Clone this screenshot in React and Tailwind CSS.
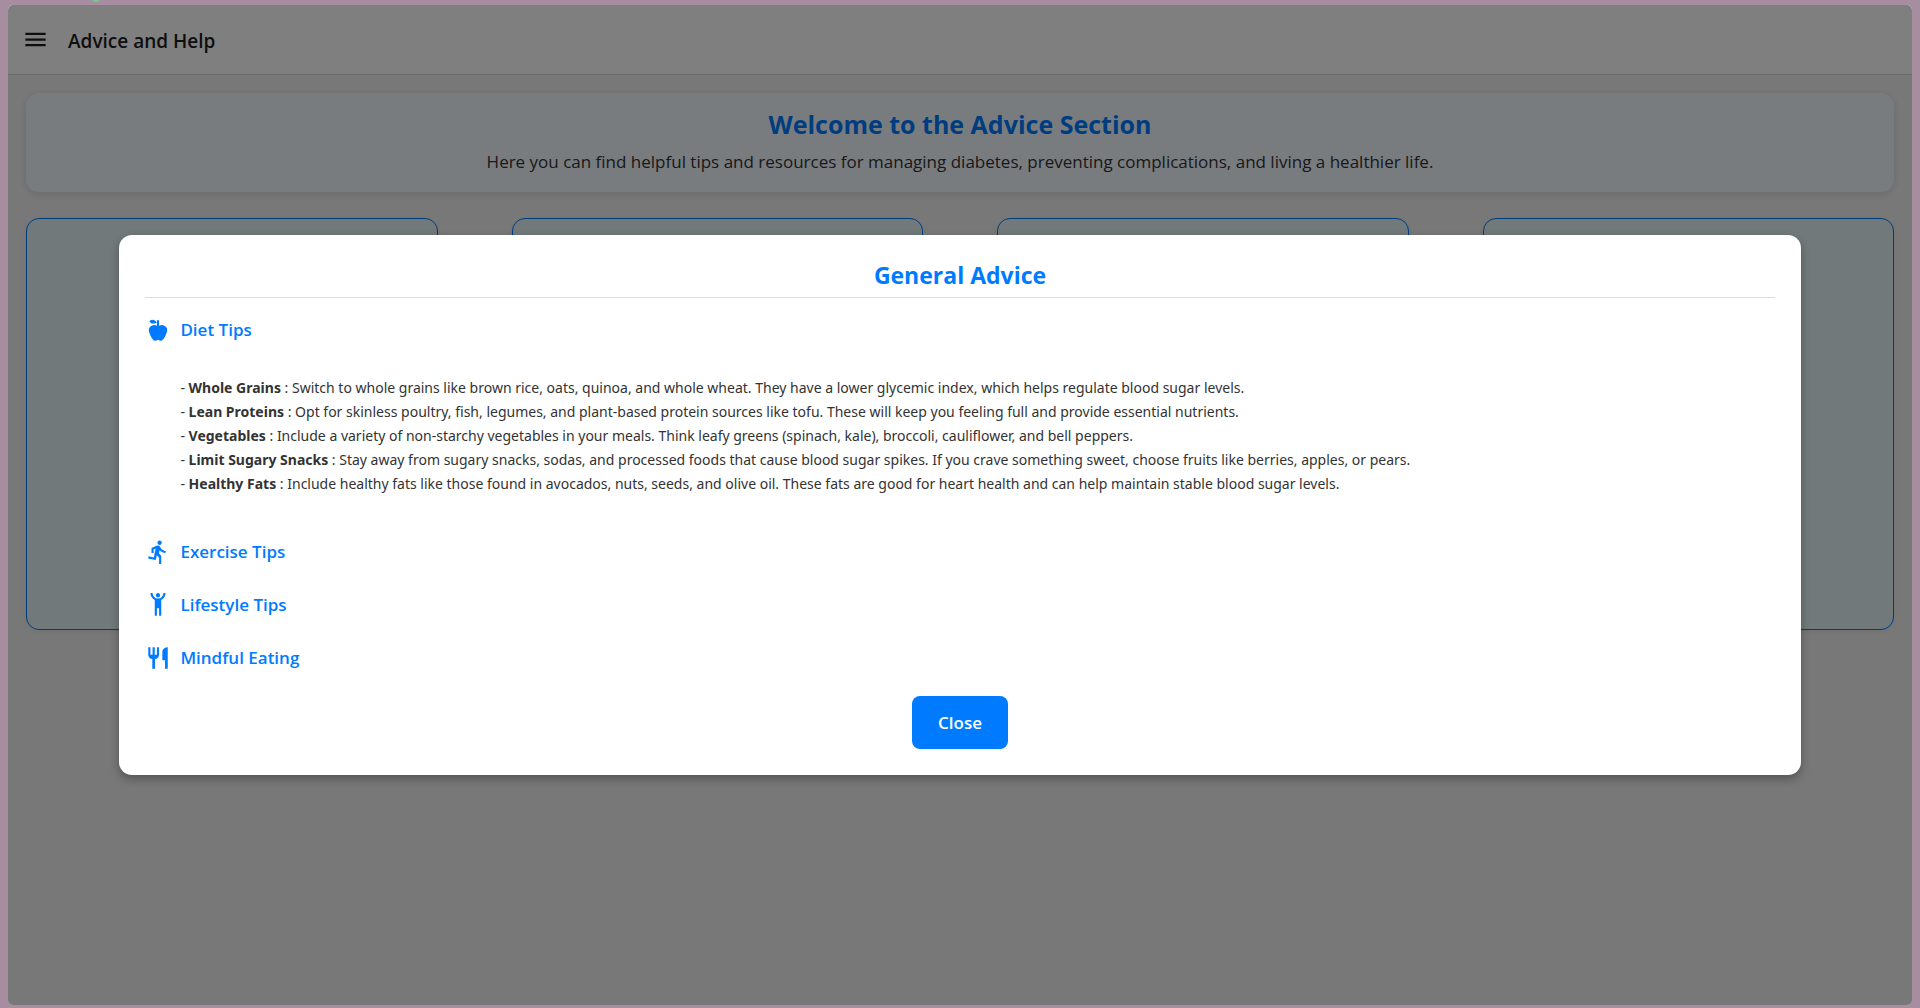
const ICONS = {
  apple:
    "M20,10C22,13 17,22 15,22C13,22 13,21 12,21C11,21 11,22 9,22C7,22 2,13 4,10C6,7 9,7 11,8V5C5.38,8.07 4.11,3.78 4.11,3.78C4.11,3.78 6.77,0.19 11,5V3H13V8C15,7 18,7 20,10Z",
  run: "M13.49,5.48C14.59,5.48 15.49,4.58 15.49,3.48C15.49,2.38 14.59,1.48 13.49,1.48C12.39,1.48 11.49,2.38 11.49,3.48C11.49,4.58 12.39,5.48 13.49,5.48M9.89,19.38L10.89,14.98L12.99,16.98V22.98H14.99V15.48L12.89,13.48L13.49,10.48C14.79,11.98 16.79,12.98 18.99,12.98V10.98C17.09,10.98 15.49,9.98 14.69,8.58L13.69,6.98C13.29,6.38 12.69,5.98 11.99,5.98C11.69,5.98 11.49,6.08 11.19,6.08L5.99,8.28V12.98H7.99V9.58L9.79,8.88L8.19,16.98L3.29,15.98L2.89,17.98L9.89,19.38Z",
  human:
    "M5,1C5,3.7 6.56,6.16 9,7.32V22H11V15H13V22H15V7.31C17.44,6.16 19,3.7 19,1H17A5,5 0 0,1 12,6A5,5 0 0,1 7,1M12,1C10.89,1 10,1.89 10,3C10,4.11 10.89,5 12,5C13.11,5 14,4.11 14,3C14,1.89 13.11,1 12,1Z",
  silverware:
    "M11,9H9V2H7V9H5V2H3V9C3,11.12 4.66,12.84 6.75,12.97V22H9.25V12.97C11.34,12.84 13,11.12 13,9V2H11V9M16,6V14H18.5V22H21V2C18.24,2 16,4.24 16,6Z",
  menu: "M3,6H21V8H3V6M3,11H21V13H3V11M3,16H21V18H3V16Z",
};

const DIET_TIPS = [
  ["Whole Grains", "Switch to whole grains like brown rice, oats, quinoa, and whole wheat. They have a lower glycemic index, which helps regulate blood sugar levels."],
  ["Lean Proteins", "Opt for skinless poultry, fish, legumes, and plant-based protein sources like tofu. These will keep you feeling full and provide essential nutrients."],
  ["Vegetables", "Include a variety of non-starchy vegetables in your meals. Think leafy greens (spinach, kale), broccoli, cauliflower, and bell peppers."],
  ["Limit Sugary Snacks", "Stay away from sugary snacks, sodas, and processed foods that cause blood sugar spikes. If you crave something sweet, choose fruits like berries, apples, or pears."],
  ["Healthy Fats", "Include healthy fats like those found in avocados, nuts, seeds, and olive oil. These fats are good for heart health and can help maintain stable blood sugar levels."],
];

function Icon({ name, className }) {
  return (
    <svg viewBox="0 0 24 24" fill="currentColor" className={className} aria-hidden="true">
      <path d={ICONS[name]} />
    </svg>
  );
}

function Section({ icon, title, open, children }) {
  return (
    <section>
      <button
        type="button"
        aria-expanded={!!open}
        className="flex h-[53px] w-full items-center gap-[9px] text-left text-[17px] font-semibold text-[#007bff]"
      >
        <Icon name={icon} className="size-[26px] shrink-0" />
        {title}
      </button>
      {children}
    </section>
  );
}

function GeneralAdviceDialog() {
  return (
    <div
      role="dialog"
      aria-modal="true"
      aria-labelledby="dialog-title"
      className="w-[90%] rounded-[13px] bg-white p-[26px] shadow-[0_4px_10px_rgba(0,0,0,0.3)]"
    >
      <h2
        id="dialog-title"
        className="mb-[5px] border-b border-[#ddd] pb-[7px] text-center text-[23px] leading-[29px] font-bold text-[#007bff]"
      >
        General Advice
      </h2>
      <Section icon="apple" title="Diet Tips" open>
        <ul className="pt-5 pb-[29px] pl-[35px] font-['Noto_Sans',sans-serif] text-[14px] leading-6 text-[#333]">
          {DIET_TIPS.map(([name, text]) => (
            <li key={name}>
              - <strong className="font-bold">{name}</strong> : {text}
            </li>
          ))}
        </ul>
      </Section>
      <Section icon="run" title="Exercise Tips" />
      <Section icon="human" title="Lifestyle Tips" />
      <Section icon="silverware" title="Mindful Eating" />
      <div className="mt-3 flex justify-center">
        <button
          type="button"
          className="h-[53px] rounded-lg bg-[#007bff] px-[26px] text-[17px] font-semibold text-white"
        >
          Close
        </button>
      </div>
    </div>
  );
}

export default function App() {
  return (
    <div className="relative flex h-screen bg-[#a68da0] px-2 pt-[5px] pb-[3px] font-['Open_Sans',sans-serif]">
      <div className="absolute top-[-8px] left-[91px] size-[10px] rounded-full bg-[#7fc48c]" />
      <div className="relative flex flex-1 flex-col overflow-hidden rounded-[5px] bg-[#f2f1f1]">
        <header className="flex h-[70px] shrink-0 items-center gap-[19px] border-b border-[#d8d8d8] bg-white px-[14px] text-[#1c1c1e]">
          <button type="button" aria-label="Menu">
            <Icon name="menu" className="size-[27px]" />
          </button>
          <h1 className="pt-1 text-[19px] font-semibold">Advice and Help</h1>
        </header>
        <main className="flex flex-col gap-[26px] p-[18px]">
          <section className="rounded-[13px] bg-[#f0f8ff] px-5 pt-[13px] pb-[15px] text-center shadow-[0_2px_8px_rgba(0,0,0,0.12)]">
            <h2 className="text-[25px] leading-9 font-bold text-[#007bff]">
              Welcome to the Advice Section
            </h2>
            <p className="mt-[5px] text-[17px] leading-[30px] text-[#333]">
              Here you can find helpful tips and resources for managing diabetes, preventing
              complications, and living a healthier life.
            </p>
          </section>
          <div className="grid grid-cols-4 gap-[74px]">
            {[0, 1, 2, 3].map((card) => (
              <div
                key={card}
                className="aspect-square rounded-[13px] border border-[#007bff] bg-[#e4f2f6] shadow-[0_2px_6px_rgba(0,0,0,0.06)]"
              />
            ))}
          </div>
        </main>
        <div className="absolute inset-0 flex items-center justify-center bg-black/50 px-[18px]">
          <GeneralAdviceDialog />
        </div>
      </div>
    </div>
  );
}
